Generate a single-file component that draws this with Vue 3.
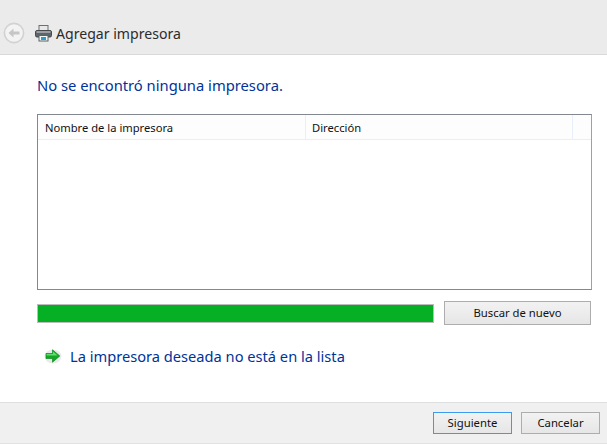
<script setup>
const columns = [
  { label: 'Nombre de la impresora', cls: 'c1' },
  { label: 'Dirección', cls: 'c2' },
  { label: '', cls: 'c3' }
]
</script>

<template>
  <div class="win">
    <header class="head">
      <svg class="back" width="22" height="22" viewBox="0 0 22 22">
        <circle cx="11" cy="11" r="9.6" fill="#f3f3f3" stroke="#d2d2d2" stroke-width="1.6" />
        <path d="M5.5 11 L10.5 6.5 V9.4 H16.5 V12.6 H10.5 V15.5 Z" fill="#c6c6c6" />
      </svg>
      <svg class="printer" width="17" height="17" viewBox="0 0 17 17">
        <rect x="4" y="0.5" width="9" height="5" fill="#e8e8e8" stroke="#6f6f6f" />
        <rect x="0.5" y="5.5" width="16" height="6.5" rx="1.5" fill="#5f6468" stroke="#45494c" />
        <rect x="1.5" y="6" width="14" height="2" fill="#9a9fa3" />
        <rect x="4" y="10.5" width="9" height="5.5" fill="#f4f7f8" stroke="#5d6266" />
        <rect x="6" y="12" width="5" height="3" fill="#2b9fc4" />
      </svg>
      <span class="title">Agregar impresora</span>
    </header>

    <main class="body">
      <h1 class="heading">No se encontró ninguna impresora.</h1>

      <div class="table">
        <div class="thead">
          <div v-for="c in columns" :key="c.cls" class="th" :class="c.cls">{{ c.label }}</div>
        </div>
      </div>

      <div class="progress-row">
        <div class="progress"></div>
        <button class="btn search">Buscar de nuevo</button>
      </div>

      <div class="link">
        <svg class="arrow" width="18" height="16" viewBox="0 0 18 16">
          <ellipse cx="9" cy="8.5" rx="8.5" ry="7" fill="#dcdcdc" opacity="0.6" />
          <path d="M2 5.5 H8.5 V1.8 L15.8 8 L8.5 14.2 V10.5 H2 Z" fill="#12a826" stroke="#0e8a1f" stroke-width="0.7" />
          <path d="M2.6 6.1 H9 V3.4 L13.6 7.5 H2.6 Z" fill="#5fe06c" />
        </svg>
        <span>La impresora deseada no está en la lista</span>
      </div>
    </main>

    <footer class="foot">
      <button class="btn action primary">Siguiente</button>
      <button class="btn action">Cancelar</button>
    </footer>
  </div>
</template>

<style>
html, body { margin: 0; background: #fff; }
</style>

<style scoped>
.win {
  width: 607px;
  height: 444px;
  display: flex;
  flex-direction: column;
  overflow: hidden;
  background: #fff;
  font-family: "Noto Sans", "Open Sans", sans-serif;
  color: #111;
}
.head {
  height: 55px;
  box-sizing: border-box;
  flex: none;
  background: #ebebeb;
  border-bottom: 1px solid #d9d9d9;
  display: flex;
  align-items: flex-start;
  padding: 22px 0 0 3px;
}
.back { flex: none; }
.printer { flex: none; margin: 3px 0 0 10px; }
.title {
  margin: 2px 0 0 4px;
  font-size: 14.1px;
  line-height: 20px;
  color: #2b2b2b;
}
.body {
  flex: 1;
  padding: 0 15px 0 37px;
  display: flex;
  flex-direction: column;
  min-height: 0;
}
.heading {
  margin: 19px 0 0;
  font-size: 14.75px;
  line-height: 22px;
  font-weight: 400;
  color: #003399;
}
.table {
  margin-top: 18px;
  height: 176px;
  box-sizing: border-box;
  border: 1px solid #828790;
  border-right-color: #a0a0a0;
}
.thead {
  display: flex;
  height: 25px;
  box-sizing: border-box;
  border-bottom: 1px solid #e8effb;
  background: #fdfdfd;
}
.th {
  box-sizing: border-box;
  font-size: 11.2px;
  line-height: 25px;
  padding-left: 7px;
  color: #111;
  border-right: 1px solid #e8effb;
}
.c1 { width: 268px; }
.c2 { width: 267px; padding-left: 6px; }
.c3 { flex: 1; border-right: none; }
.progress-row {
  margin-top: 11px;
  display: flex;
  align-items: center;
  gap: 10px;
}
.progress {
  width: 397px;
  height: 19px;
  box-sizing: border-box;
  background: #06b025;
  border: 1px solid #bcbcbc;
}
.btn {
  box-sizing: border-box;
  padding: 0 0 2px;
  font-family: inherit;
  font-size: 11.3px;
  color: #111;
  background: linear-gradient(#f2f2f2, #e6e6e6);
  border: 1px solid #adadad;
}
.search { width: 147px; height: 24px; }
.link {
  margin-top: 21px;
  display: flex;
  align-items: center;
  font-size: 14.65px;
  line-height: 20px;
  color: #003399;
  margin-left: 7px;
}
.arrow { flex: none; margin-right: 8px; }
.foot {
  height: 42px;
  box-sizing: border-box;
  flex: none;
  background: #f0f0f0;
  border-top: 1px solid #dfdfdf;
  border-bottom: 1px solid #e2e2e2;
  display: flex;
  justify-content: flex-end;
  align-items: flex-start;
  gap: 9px;
  padding: 9px 7px 0 0;
}
.action { width: 79px; height: 22px; }
.primary { border-color: #3c9bf0; }
</style>
